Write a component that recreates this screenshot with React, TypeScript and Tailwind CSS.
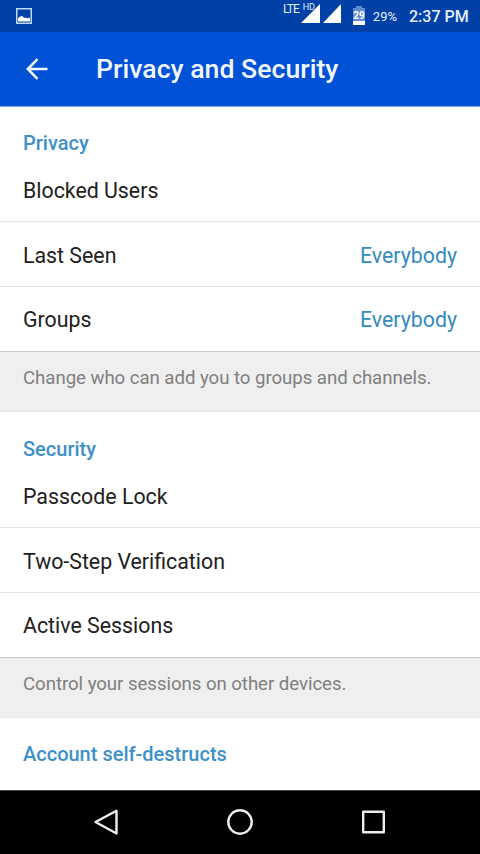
import type { ReactNode } from "react";

function Heading({ children }: { children: ReactNode }) {
  return (
    <h2 className="h-[55px] px-[23px] pt-[12px] text-[20px] leading-[24px] font-medium text-[#3e90c9]">
      {children}
    </h2>
  );
}

function Row({ label, value, first, last }: { label: string; value?: string; first?: boolean; last?: boolean }) {
  return (
    <div
      className={`flex justify-between border-b px-[23px] text-[21.33px] leading-[26px] text-[#212121] ${
        first ? "h-[48px] pt-[4px]" : last ? "h-[65px] pt-[20px]" : "h-[65px] pt-[21px]"
      } ${last ? "border-[#cbcbcb]" : "border-[#e2e2e2]"}`}
    >
      <span>{label}</span>
      {value && <span className="text-[#348bc1]">{value}</span>}
    </div>
  );
}

function Note({ children }: { children: ReactNode }) {
  return (
    <p className="h-[60px] border-b border-[#e8e8e8] bg-[#efefef] px-[23px] pt-[14px] text-[18.67px] leading-[24px] tracking-[-0.06px] whitespace-nowrap text-[#808080]">
      {children}
    </p>
  );
}

function StatusBar() {
  return (
    <div className="flex h-8 bg-[#0140a7] text-[#e4efff]">
      <svg className="mt-[8px] ml-[16px] h-4 w-4" viewBox="0 0 16 16">
        <rect x="0.75" y="0.75" width="14.5" height="14.5" fill="none" stroke="#bfd8f7" strokeWidth="1.5" />
        <path d="M2 13.5V10.5L4 8.5L6.5 8l1.5 2 2-.5 1.5 1L13 9.5l1 1v3z" fill="#fff" />
      </svg>
      <span className="ml-[251px] pt-[3px] text-[12px] leading-[12px] tracking-[-1px]">LTE</span>
      <div className="relative ml-[2px] w-[40px]">
        <svg className="h-8 w-[40px]" viewBox="0 0 40 32">
          <path d="M0 23L19 4v19zM22 23L40 4v19z" fill="#fff" />
        </svg>
        <span className="absolute top-[3px] left-[2px] text-[9px] leading-[9px] tracking-[-0.3px]">HD</span>
      </div>
      <svg className="ml-[11px] h-8 w-[14px]" viewBox="0 0 14 32">
        <path d="M4 6h6v2h3v13H1V8h3z" fill="#5f8dce" />
        <path d="M1 21h12v4H1z" fill="#fff" />
        <text x="7" y="19" textAnchor="middle" fill="#fff" fontSize="10" fontWeight="700">29</text>
      </svg>
      <span className="ml-[7px] pt-[8px] text-[13px] leading-[18px]">29%</span>
      <span className="ml-[12px] pt-[7px] text-[16px] leading-[20px] font-medium whitespace-nowrap">2:37 PM</span>
    </div>
  );
}

export default function App() {
  return (
    <div className="flex h-[854px] w-[480px] flex-col overflow-hidden bg-white font-[Roboto,sans-serif]">
      <StatusBar />
      <header className="flex h-[75px] items-center border-b border-[#7ba5e4] bg-[#0151d6] text-[#f0f7ff]">
        <svg className="ml-[26px] h-[22px] w-[22px]" viewBox="0 0 22 22" fill="none" stroke="currentColor" strokeWidth="2.5">
          <path d="M21.5 11H2M11.5 1.2L1.8 11l9.7 9.8" />
        </svg>
        <h1 className="ml-[48px] text-[26.67px] leading-[32px] font-medium whitespace-nowrap">Privacy and Security</h1>
      </header>
      <main className="flex-1">
        <section className="pt-[12px]">
          <Heading>Privacy</Heading>
          <Row label="Blocked Users" first />
          <Row label="Last Seen" value="Everybody" />
          <Row label="Groups" value="Everybody" last />
          <Note>Change who can add you to groups and channels.</Note>
        </section>
        <section className="pt-[13px]">
          <Heading>Security</Heading>
          <Row label="Passcode Lock" first />
          <Row label="Two-Step Verification" />
          <Row label="Active Sessions" last />
          <Note>Control your sessions on other devices.</Note>
        </section>
        <section className="pt-[12px]">
          <Heading>Account self-destructs</Heading>
        </section>
      </main>
      <nav className="h-16 border-t border-[#444] bg-black">
        <svg className="h-[63px] w-[480px]" viewBox="0 0 480 63" fill="none" stroke="#ededed" strokeWidth="2.4" strokeLinejoin="round">
          <path d="M95.5 31L116.5 19.8V42.5z" />
          <circle cx="240" cy="31" r="11.7" />
          <rect x="363.2" y="20.7" width="20.6" height="20.6" />
        </svg>
      </nav>
    </div>
  );
}
